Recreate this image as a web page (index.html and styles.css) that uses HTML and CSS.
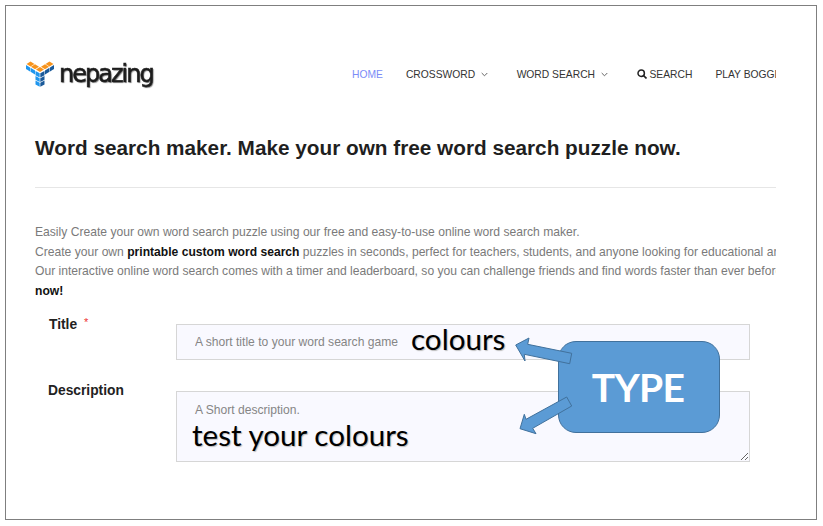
FILE: index.html
```html
<!DOCTYPE html>
<html lang="en">
<head>
<meta charset="utf-8">
<title>Word search maker</title>
<link rel="stylesheet" href="styles.css">
</head>
<body>
<div class="frame">
  <div class="page">
    <header class="header">
      <a class="logo">
        <svg class="logo-icon" width="28" height="26" viewBox="0 0 28 26">
          <g fill="#f7941d">
            <path d="M0.500 3 4.500 0.500 8.500 3 4.500 5.500Z"/><path d="M5 5.800 9 3.300 13 5.800 9 8.300Z"/><path d="M10 8.600 14 6.100 18 8.600 14 11.100Z"/><path d="M15 5.800 19 3.300 23 5.800 19 8.300Z"/><path d="M19.500 3 23.500 0.500 27.500 3 23.500 5.500Z"/>
          </g>
          <g fill="#1f96ee">
            <path d="M0 4 4 6.500V10.500L0 8Z"/><path d="M4.500 6.800 9 9.500V13.500L4.500 10.800Z"/><path d="M9.500 10 13.700 12.300V16.500L9.500 14.200Z"/><path d="M9.500 15 13.700 17.300V21L9.500 18.700Z"/><path d="M9.500 19.500 13.700 21.800V25.800L9.500 23.500Z"/>
          </g>
          <g fill="#1a5a9a">
            <path d="M28 4 24 6.500V10.500L28 8Z"/><path d="M23.500 6.800 19 9.500V13.500L23.500 10.800Z"/><path d="M18.500 10 14.300 12.300V16.500L18.500 14.200Z"/><path d="M18.500 15 14.300 17.300V21L18.500 18.700Z"/><path d="M18.500 19.500 14.300 21.800V25.800L18.500 23.500Z"/>
          </g>
        </svg>
        <span class="logo-text">nepazing</span>
      </a>
      <nav class="nav">
        <a class="nav-item active">HOME</a>
        <a class="nav-item has-menu">CROSSWORD
          <svg class="chev" width="7" height="5" viewBox="0 0 7 5"><path d="M.7 1 3.500 3.800 6.300 1" fill="none" stroke="#666" stroke-width="1"/></svg></a>
        <a class="nav-item has-menu">WORD SEARCH
          <svg class="chev" width="7" height="5" viewBox="0 0 7 5"><path d="M.7 1 3.500 3.800 6.300 1" fill="none" stroke="#666" stroke-width="1"/></svg></a>
        <a class="nav-item search-item">
          <svg width="10" height="10" viewBox="0 0 10 10"><circle cx="4.200" cy="4.200" r="3.200" fill="none" stroke="#222" stroke-width="1.500"/><path d="M6.500 6.500 9.500 9.500" stroke="#222" stroke-width="1.700"/></svg>
          SEARCH</a>
        <a class="nav-item">PLAY BOGGLE</a>
      </nav>
    </header>
    <h1 class="title">Word search maker. Make your own free word search puzzle now.</h1>
    <hr class="rule">
    <p class="intro">
      Easily Create your own word search puzzle using our free and easy-to-use online word search maker.<br>
      Create your own <strong>printable custom word search</strong> puzzles in seconds, perfect for teachers, students, and anyone looking for educational and fun activities.<br>
      Our interactive online word search comes with a timer and leaderboard, so you can challenge friends and find words faster than ever before.<br>
      <strong>now!</strong>
    </p>
    <form class="form">
      <label class="label" for="t">Title <span class="req">*</span></label>
      <input class="field" id="t" type="text" placeholder="A short title to your word search game">
      <label class="label label-desc" for="d">Description</label>
      <textarea class="field area" id="d" placeholder="A Short description."></textarea>
    </form>
  </div>

  <div class="overlay">
    <span class="note note-a">colours</span>
    <span class="note note-b">test your colours</span>
    <div class="callout">TYPE</div>
    <svg class="arrows" width="812" height="515" viewBox="5 5 812 515">
      <path d="M514.700 344 528 337 526.700 343.300 570.700 352.300 568.700 362.700 523.300 353.300 524 360Z"/>
      <path d="M519 427.700 523.300 413.300 525 418.300 565.700 396 570.700 405 531.700 427.300 535 432.700Z"/>
    </svg>
  </div>
</div>
</body>
</html>
```

FILE: styles.css
```css
* { box-sizing: border-box; }
html, body { margin: 0; padding: 0; background: #fff; }
body { font-family: "Liberation Sans", Arial, sans-serif; }

.frame {
  position: relative;
  width: 812px;
  height: 515px;
  margin: 5px 0 0 5px;
  border: 1px solid #7f7f7f;
  background: #fff;
  overflow: hidden;
}

.page {
  width: 770px;
  height: 100%;
  padding-top: 55px;
  overflow: hidden;
  display: flex;
  flex-direction: column;
}

.header {
  display: flex;
  align-items: center;
  height: 26px;
  padding-left: 20px;
  white-space: nowrap;
}
.logo { display: flex; align-items: center; width: 326px; flex: none; }
.logo-icon { flex: none; }
.logo-text {
  margin-left: 5px;
  font-family: "DejaVu Sans", sans-serif;
  font-weight: 400;
  font-size: 24px;
  line-height: 26px;
  letter-spacing: -2px;
  color: #1c1c1c;
  -webkit-text-stroke: 0.6px #1c1c1c;
  text-shadow: 1px 1px 1px #888;
  filter: blur(0.4px);
}
.nav { display: flex; align-items: center; gap: 23px; font-size: 10.300px; color: #333; flex: none; }
.nav-item { display: flex; align-items: center; gap: 6px; }
.nav-item.active { color: #7b8cf7; }
.has-menu { margin-right: 5.500px; }
.search-item { gap: 3px; }

.title {
  margin: 0;
  margin-top: 47px;
  padding-left: 29px;
  font-size: 20.750px;
  line-height: 28px;
  font-weight: 700;
  color: #1f1f1f;
  white-space: nowrap;
}
.rule {
  width: 741px;
  margin: 25px 0 0 29px;
  border: 0;
  border-top: 1px solid #e6e6e6;
}
.intro {
  margin: 0;
  margin-top: 35px;
  padding-left: 29px;
  font-size: 12.120px;
  line-height: 19.700px;
  color: #7a7a7a;
  white-space: nowrap;
}
.intro strong { color: #111; }

.form {
  display: grid;
  grid-template-columns: 127px 574px;
  row-gap: 20px;
  margin-top: 11px;
  padding-left: 43px;
}
.label { font-size: 13.800px; font-weight: 700; color: #222; line-height: 18px; }
.label-desc { margin: 2px 0 0 -1px; }
.req { color: #e33; font-size: 11px; font-weight: 400; vertical-align: 3px; margin-left: 3px; }
.field {
  display: block;
  width: 574px;
  height: 36px;
  margin-top: 11px;
  padding: 0 18px;
  border: 1px solid #d6d6d6;
  background: #f9f9ff;
  font-family: "Liberation Sans", Arial, sans-serif;
  font-size: 12.100px;
  outline: none;
}
.field::placeholder { color: #858585; opacity: 1; }
.area { height: 71px; padding-top: 11px; padding-bottom: 0; resize: both; }

.overlay { position: absolute; inset: 0; pointer-events: none; }
.note {
  position: absolute;
  font-family: Lato, "Open Sans", sans-serif;
  color: #000;
  text-shadow: 1px 1px 1px #bbb;
  white-space: nowrap;
  line-height: 1;
}
.note-a { left: 405px; top: 318px; font-size: 29.600px; }
.note-b { left: 186px; top: 414px; font-size: 29.600px; }
.callout {
  position: absolute;
  left: 552px;
  top: 335px;
  width: 162px;
  height: 92px;
  display: flex;
  align-items: center;
  justify-content: center;
  padding-right: 2px;
  background: #5b9bd5;
  border: 1px solid #41719c;
  border-radius: 18px;
  color: #fff;
  font-family: Lato, "Open Sans", sans-serif;
  font-weight: 700;
  font-size: 39px;
  letter-spacing: -0.700px;
}
.arrows { position: absolute; left: 0; top: 0; }
.arrows path { fill: #5b9bd5; stroke: #41719c; stroke-width: 1; }
```
